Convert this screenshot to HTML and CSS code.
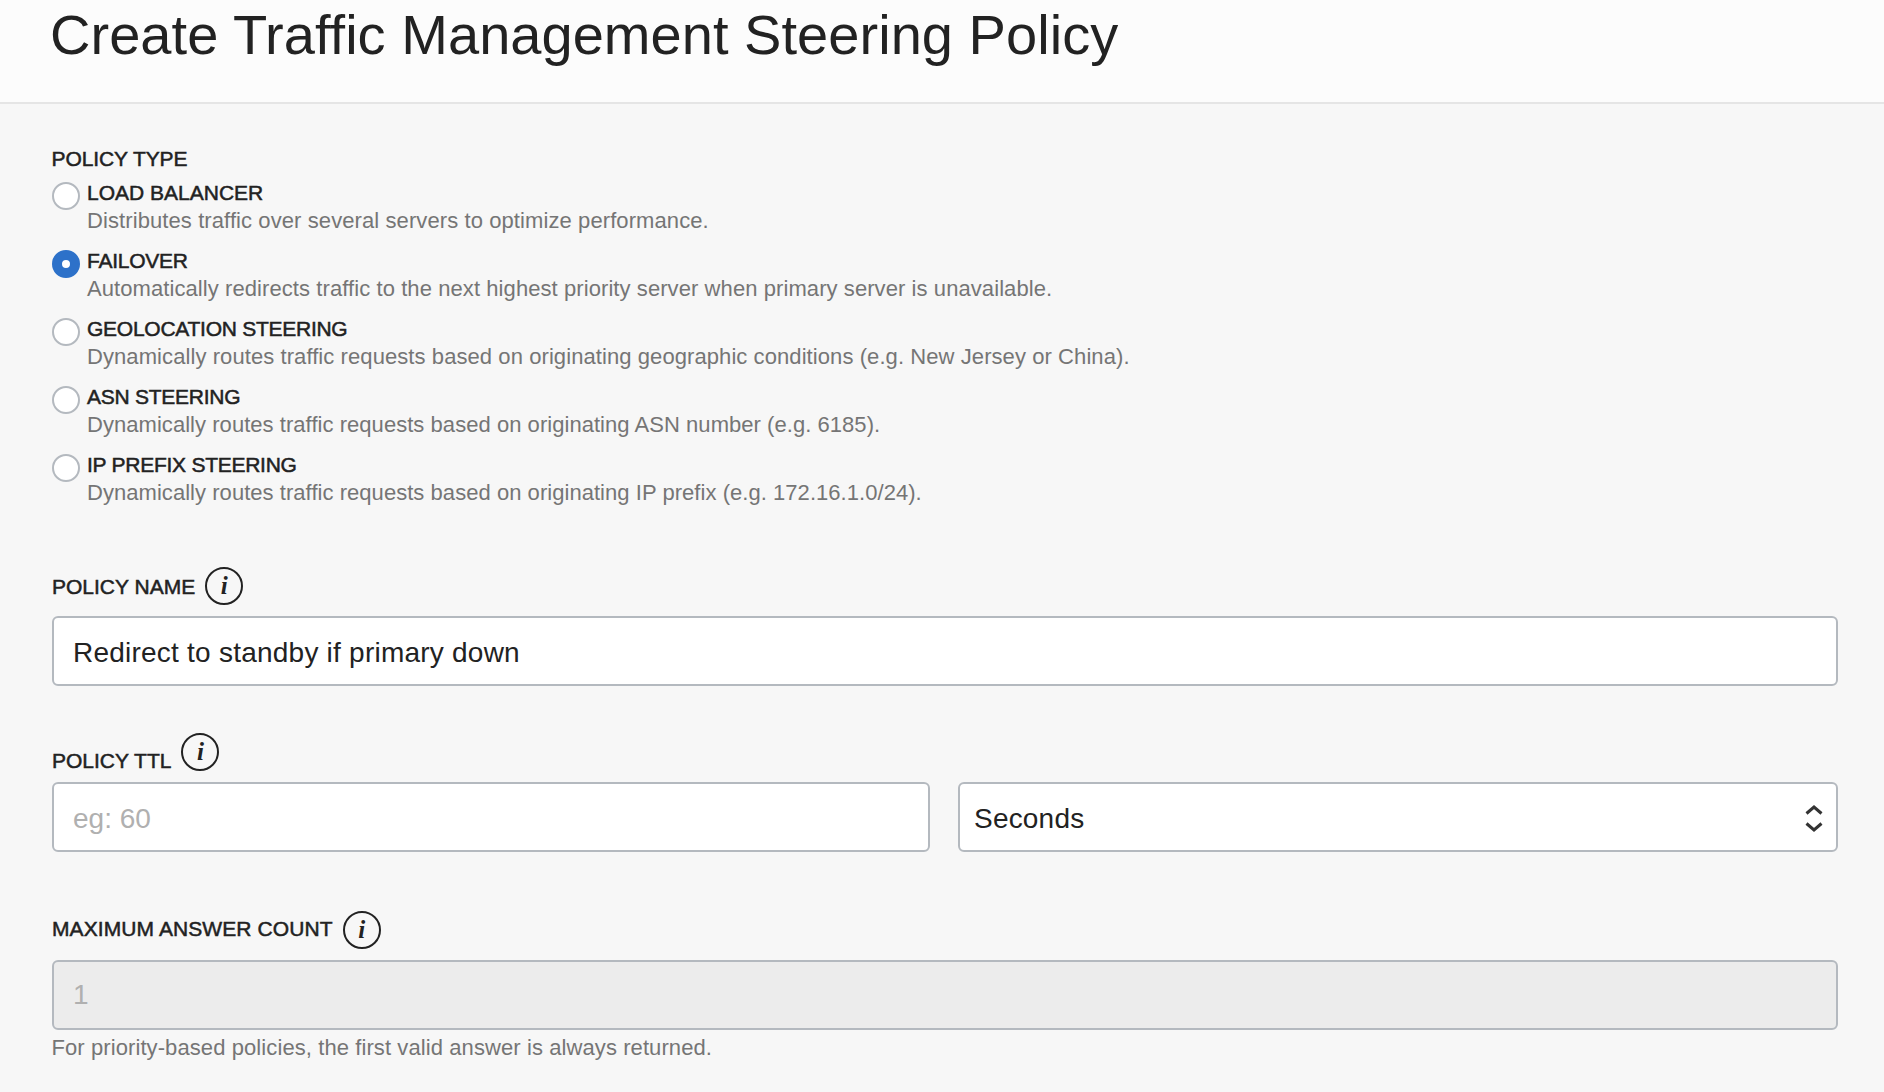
FILE: index.html
```html
<!DOCTYPE html>
<html lang="en">
<head>
<meta charset="utf-8">
<title>Create Traffic Management Steering Policy</title>
<link rel="stylesheet" href="styles.css">
</head>
<body>
<header class="header"><h1 class="title">Create Traffic Management Steering Policy</h1></header>
<main class="form">
  <section class="types">
    <h2 class="label t-type">POLICY TYPE</h2>
    <div class="options">
      <label class="option"><input class="radio" type="radio" name="type"><span class="copy"><span class="label">LOAD BALANCER</span><span class="desc d-load">Distributes traffic over several servers to optimize performance.</span></span></label>
      <label class="option"><input class="radio" type="radio" name="type" checked><span class="copy"><span class="label tight">FAILOVER</span><span class="desc">Automatically redirects traffic to the next highest priority server when primary server is unavailable.</span></span></label>
      <label class="option"><input class="radio" type="radio" name="type"><span class="copy"><span class="label tight">GEOLOCATION STEERING</span><span class="desc">Dynamically routes traffic requests based on originating geographic conditions (e.g. New Jersey or China).</span></span></label>
      <label class="option"><input class="radio" type="radio" name="type"><span class="copy"><span class="label tight">ASN STEERING</span><span class="desc d-numeric">Dynamically routes traffic requests based on originating ASN number (e.g. 6185).</span></span></label>
      <label class="option"><input class="radio" type="radio" name="type"><span class="copy"><span class="label tight">IP PREFIX STEERING</span><span class="desc d-numeric">Dynamically routes traffic requests based on originating IP prefix (e.g. 172.16.1.0/24).</span></span></label>
    </div>
  </section>
  <section class="field name">
    <div class="caption"><span class="label">POLICY NAME</span><span class="info">i</span></div>
    <input class="input i-name" value="Redirect to standby if primary down">
  </section>
  <section class="field ttl">
    <div class="caption"><span class="label">POLICY TTL</span><span class="info">i</span></div>
    <div class="pair">
      <input class="input" placeholder="eg: 60">
      <div class="input select"><span>Seconds</span>
        <svg class="arrows" width="18" height="30" viewBox="0 0 18 30" fill="none" stroke="#333" stroke-width="3"><path d="M1.5 10.500 9 4 16.500 10.500M1.500 20.500 9 27 16.500 20.500"/></svg>
      </div>
    </div>
  </section>
  <section class="field max">
    <div class="caption"><span class="label">MAXIMUM ANSWER COUNT</span><span class="info">i</span></div>
    <input class="input" placeholder="1" disabled>
    <p class="desc d-help">For priority-based policies, the first valid answer is always returned.</p>
  </section>
</main>
</body>
</html>
```
FILE: styles.css
```css
* { box-sizing: border-box; }
body {
  margin: 0;
  height: 1092px;
  overflow: hidden;
  background: #f7f7f7;
  color: #222;
  font-family: "Liberation Sans", Arial, sans-serif;
}
.header {
  height: 104px;
  padding: 3px 50px 0;
  background: #fcfcfc;
  border-bottom: 2px solid #e5e5e5;
}
.title { margin: 0; font-size: 56px; line-height: 64px; font-weight: 400; letter-spacing: 0.04px; font-variant-ligatures: common-ligatures; white-space: nowrap; }
.form { padding: 40px 46px 0 52px; }
.label {
  display: block;
  margin: 0;
  font-size: 21px;
  line-height: 30px;
  height: 28px;
  font-weight: 400;
  white-space: nowrap;
  -webkit-text-stroke: 0.5px #222;
}
.tight { letter-spacing: -0.26px; }
.t-type { margin-left: -0.5px; letter-spacing: -0.1px; }
.desc {
  display: block;
  margin: 0;
  color: #757575;
  font-size: 22px;
  line-height: 30px;
  height: 28px;
  letter-spacing: 0.08px;
  white-space: nowrap;
}
.d-load { letter-spacing: 0.092px; }
.d-numeric { letter-spacing: 0.045px; }
.options { display: flex; flex-direction: column; gap: 12px; margin-top: 6px; }
.option { display: flex; gap: 7px; height: 56px; }
.radio {
  appearance: none;
  flex: none;
  width: 28px;
  height: 28px;
  margin: 4px 0 0;
  border: 2px solid #b4b9bf;
  border-radius: 50%;
  background: #fff;
}
.radio:checked { border: 10px solid #2d71c9; }
.name { margin-top: 61px; }
.ttl { margin-top: 47px; }
.max { margin-top: 59px; }
.caption { display: flex; align-items: flex-start; gap: 10px; height: 38px; margin-bottom: 11px; }
.caption .label { margin-top: 5px; }
.ttl .label { margin-top: 13px; }
.max .label { margin-top: 3px; letter-spacing: 0.09px; }
.info {
  width: 38px;
  height: 38px;
  border: 2px solid #222;
  border-radius: 50%;
  font: italic bold 25px/33px "Liberation Serif", serif;
  text-align: center;
}
.input {
  display: block;
  width: 100%;
  height: 70px;
  padding: 4px 19px 0;
  border: 2px solid #b4b9bf;
  border-radius: 6px;
  background: #fff;
  color: #222;
  font: 28px "Liberation Sans", Arial, sans-serif;
}
.i-name { letter-spacing: 0.23px; }
.input::placeholder { color: #b0b0b0; }
.input:disabled { padding-top: 0; background: #ececec; }
.pair { display: grid; grid-template-columns: 878px 880px; gap: 28px; }
.select { display: flex; align-items: center; justify-content: space-between; padding: 4px 13px 0 14px; letter-spacing: 0.2px; }
.arrows { flex: none; margin-bottom: 3px; }
.d-help { margin: 3px 0 0 -0.5px; letter-spacing: 0.09px; }
```
